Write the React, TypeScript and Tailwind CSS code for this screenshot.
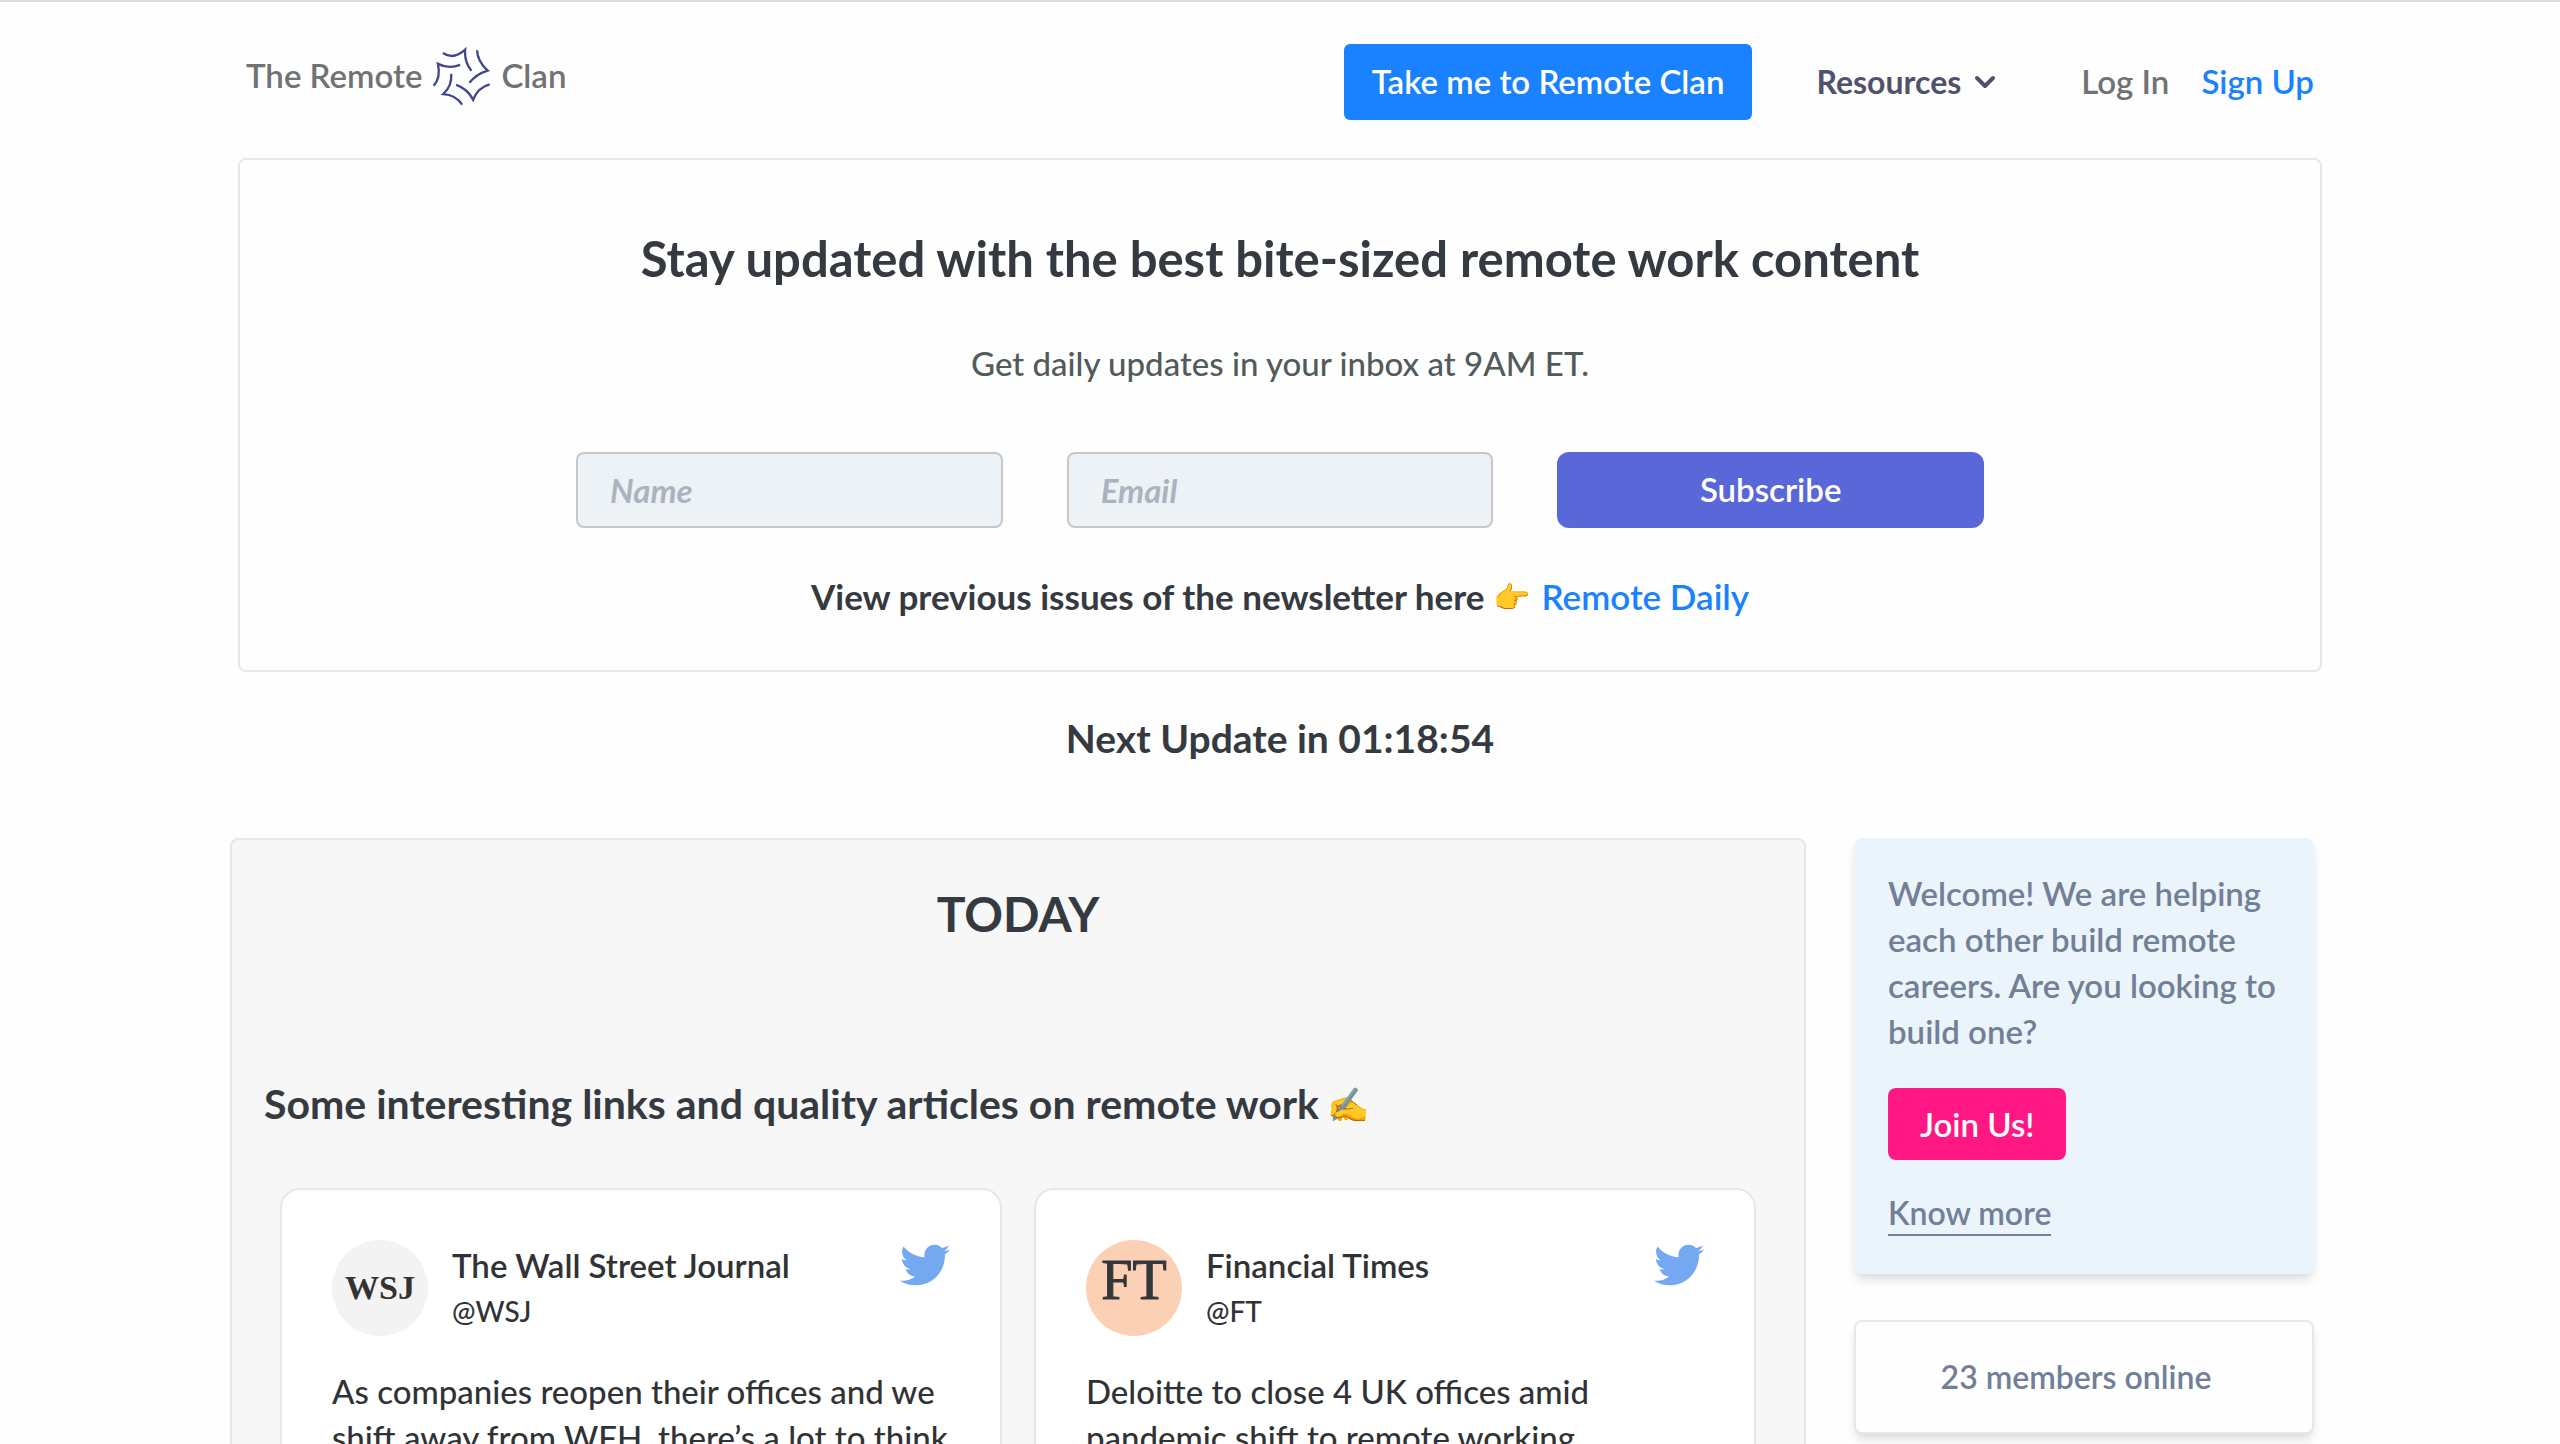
import React from 'react';
import { ChevronDown } from 'lucide-react';
import { FaTwitter } from 'react-icons/fa';

interface Tweet {
  name: string;
  handle: string;
  text: string;
  avatar: React.ReactNode;
}

const tweets: Tweet[] = [
  {
    name: 'The Wall Street Journal',
    handle: '@WSJ',
    text: 'As companies reopen their offices and we shift away from WFH, there’s a lot to think',
    avatar: (
      <div className="size-24 shrink-0 rounded-full bg-[#f3f3f3] flex items-center justify-center font-['Liberation_Serif',serif] font-bold text-[34px] text-[#333]">
        WSJ
      </div>
    ),
  },
  {
    name: 'Financial Times',
    handle: '@FT',
    text: 'Deloitte to close 4 UK offices amid pandemic shift to remote working',
    avatar: (
      <div className="size-24 shrink-0 rounded-full bg-[#fcd0b4] flex items-center justify-center pb-4 font-['Liberation_Serif',serif] text-[56px] leading-none text-[#33373a] [-webkit-text-stroke:1px_#33373a]">
        FT
      </div>
    ),
  },
];

const ClanMark: React.FC = () => (
  <svg
    viewBox="34 48 176 178"
    className="size-[59px]"
    fill="none"
    stroke="#414788"
    strokeWidth={7}
    aria-hidden="true"
  >
    <path d="M66 66 Q98 88 133 56 Q130 92 152 120" />
    <path d="M169 58 Q170 92 201 119 Q165 130 146 156" />
    <path d="M207 161 Q172 170 157 207 Q141 174 106 162" />
    <path d="M124 222 Q104 192 67 190 Q94 165 91 129" />
    <path d="M38 165 Q60 140 51 99 Q82 115 118 102" />
  </svg>
);

const Header: React.FC = () => (
  <header className="max-w-[2084px] mx-auto px-2 pt-[42px] pb-[38px] flex items-start justify-between">
    <a href="#" className="h-16 flex items-center gap-[10px] text-[33px] font-semibold text-[#707274]">
      <span>The Remote</span>
      <ClanMark />
      <span>Clan</span>
    </a>

    <nav className="flex items-center text-[33px]">
      <button className="h-[76px] px-7 rounded-md bg-[#1a82ff] text-white font-semibold">
        Take me to Remote Clan
      </button>
      <button className="ml-16 flex items-center gap-2 text-[32px] font-bold text-[#50526c]">
        Resources
        <ChevronDown size={32} strokeWidth={3} />
      </button>
      <a href="#" className="ml-20 font-semibold text-[#707274]">
        Log In
      </a>
      <a href="#" className="ml-8 font-semibold text-[#1a82ff]">
        Sign Up
      </a>
    </nav>
  </header>
);

const SignupCard: React.FC = () => (
  <section className="max-w-[2084px] mx-auto border-2 border-[#e3e8ee] rounded-lg pt-[68px] pb-[50px] text-center">
    <h1 className="text-[49px] leading-[60px] font-bold">
      Stay updated with the best bite-sized remote work content
    </h1>
    <p className="mt-[52px] text-[33px] leading-[46px] font-medium text-[#515b5b]">
      Get daily updates in your inbox at 9AM ET.
    </p>

    <form className="max-w-[1408px] mx-auto mt-[66px] grid grid-cols-3 gap-16 text-[33px]">
      <input
        type="text"
        aria-label="Name"
        placeholder="Name"
        className="h-[76px] min-w-0 px-8 border-2 border-[#c5c7ca] rounded-lg bg-[#edf2f7] font-bold italic placeholder:text-[#adb2bf]"
      />
      <input
        type="email"
        aria-label="Email"
        placeholder="Email"
        className="h-[76px] min-w-0 px-8 border-2 border-[#c5c7ca] rounded-lg bg-[#edf2f7] font-bold italic placeholder:text-[#adb2bf]"
      />
      <button type="button" className="h-[76px] rounded-xl bg-[#5a67d8] text-white font-semibold">
        Subscribe
      </button>
    </form>

    <p className="mt-11 flex items-center justify-center text-[35px] leading-[48px] font-bold">
      View previous issues of the newsletter here
      <span className="ml-2 mr-3 text-[30px]">👉</span>
      <a href="#" className="font-semibold text-[#1a82ff]">
        Remote Daily
      </a>
    </p>
  </section>
);

const TweetCard: React.FC<{ tweet: Tweet }> = ({ tweet }) => (
  <article className="p-[50px] border-2 border-[#e5e7e9] rounded-[20px] bg-white text-[33px] leading-[46px] text-[#303336]">
    <div className="flex items-start justify-between">
      <div className="flex items-center gap-6">
        {tweet.avatar}
        <div>
          <h3 className="font-semibold">{tweet.name}</h3>
          <p className="text-[28px] leading-[46px] font-medium">{tweet.handle}</p>
        </div>
      </div>
      <FaTwitter size={50} className="text-[#74a8f0]" />
    </div>
    <p className="mt-8 font-medium">{tweet.text}</p>
  </article>
);

const Sidebar: React.FC = () => (
  <aside className="w-[460px] shrink-0 text-[32px] leading-[46px] font-semibold text-[#718096]">
    <div className="px-[34px] pt-8 pb-[38px] rounded-lg bg-[#ebf4fb] shadow-[0_8px_12px_-2px_rgba(0,0,0,0.1),0_4px_8px_-2px_rgba(0,0,0,0.06)]">
      <p className="text-[33px]">
        Welcome! We are helping each other build remote careers. Are you looking to build one?
      </p>
      <button className="mt-[34px] block h-[72px] px-8 rounded-lg bg-[#ff1783] text-[33px] text-white">
        Join Us!
      </button>
      <a href="#" className="mt-8 inline-block leading-[42px] border-b-2 border-[#718096]">
        Know more
      </a>
    </div>
    <div className="mt-[46px] py-8 pr-4 border-2 border-[#e3e8ee] rounded-lg bg-[#fefefe] shadow-[0_8px_12px_-2px_rgba(0,0,0,0.1),0_4px_8px_-2px_rgba(0,0,0,0.06)] text-center">
      23 members online
    </div>
  </aside>
);

const App: React.FC = () => {
  return (
    <div className="h-screen overflow-hidden border-t-2 border-[#d9dde0] bg-[#fefefe] font-['Lato',sans-serif] text-[#343a40]">
      <Header />
      <SignupCard />

      <h2 className="mt-9 text-center text-[39px] leading-[60px] font-bold">
        Next Update in 01:18:54
      </h2>

      <main className="max-w-[2100px] mx-auto mt-[70px] pr-4 flex items-start gap-12">
        <section className="flex-1 px-8 pt-11 pb-16 border-2 border-[#e3e8ee] rounded-lg bg-[#f7f7f7]">
          <h2 className="text-center text-[48px] leading-[60px] font-bold">TODAY</h2>
          <h2 className="mt-[130px] text-[41px] leading-[60px] font-bold flex items-center">
            Some interesting links and quality articles on remote work
            <span className="ml-2 text-[34px]">✍️</span>
          </h2>
          <div className="mx-4 mt-[54px] grid grid-cols-2 gap-8">
            {tweets.map((tweet) => (
              <TweetCard key={tweet.handle} tweet={tweet} />
            ))}
          </div>
        </section>
        <Sidebar />
      </main>
    </div>
  );
};

export default App;
